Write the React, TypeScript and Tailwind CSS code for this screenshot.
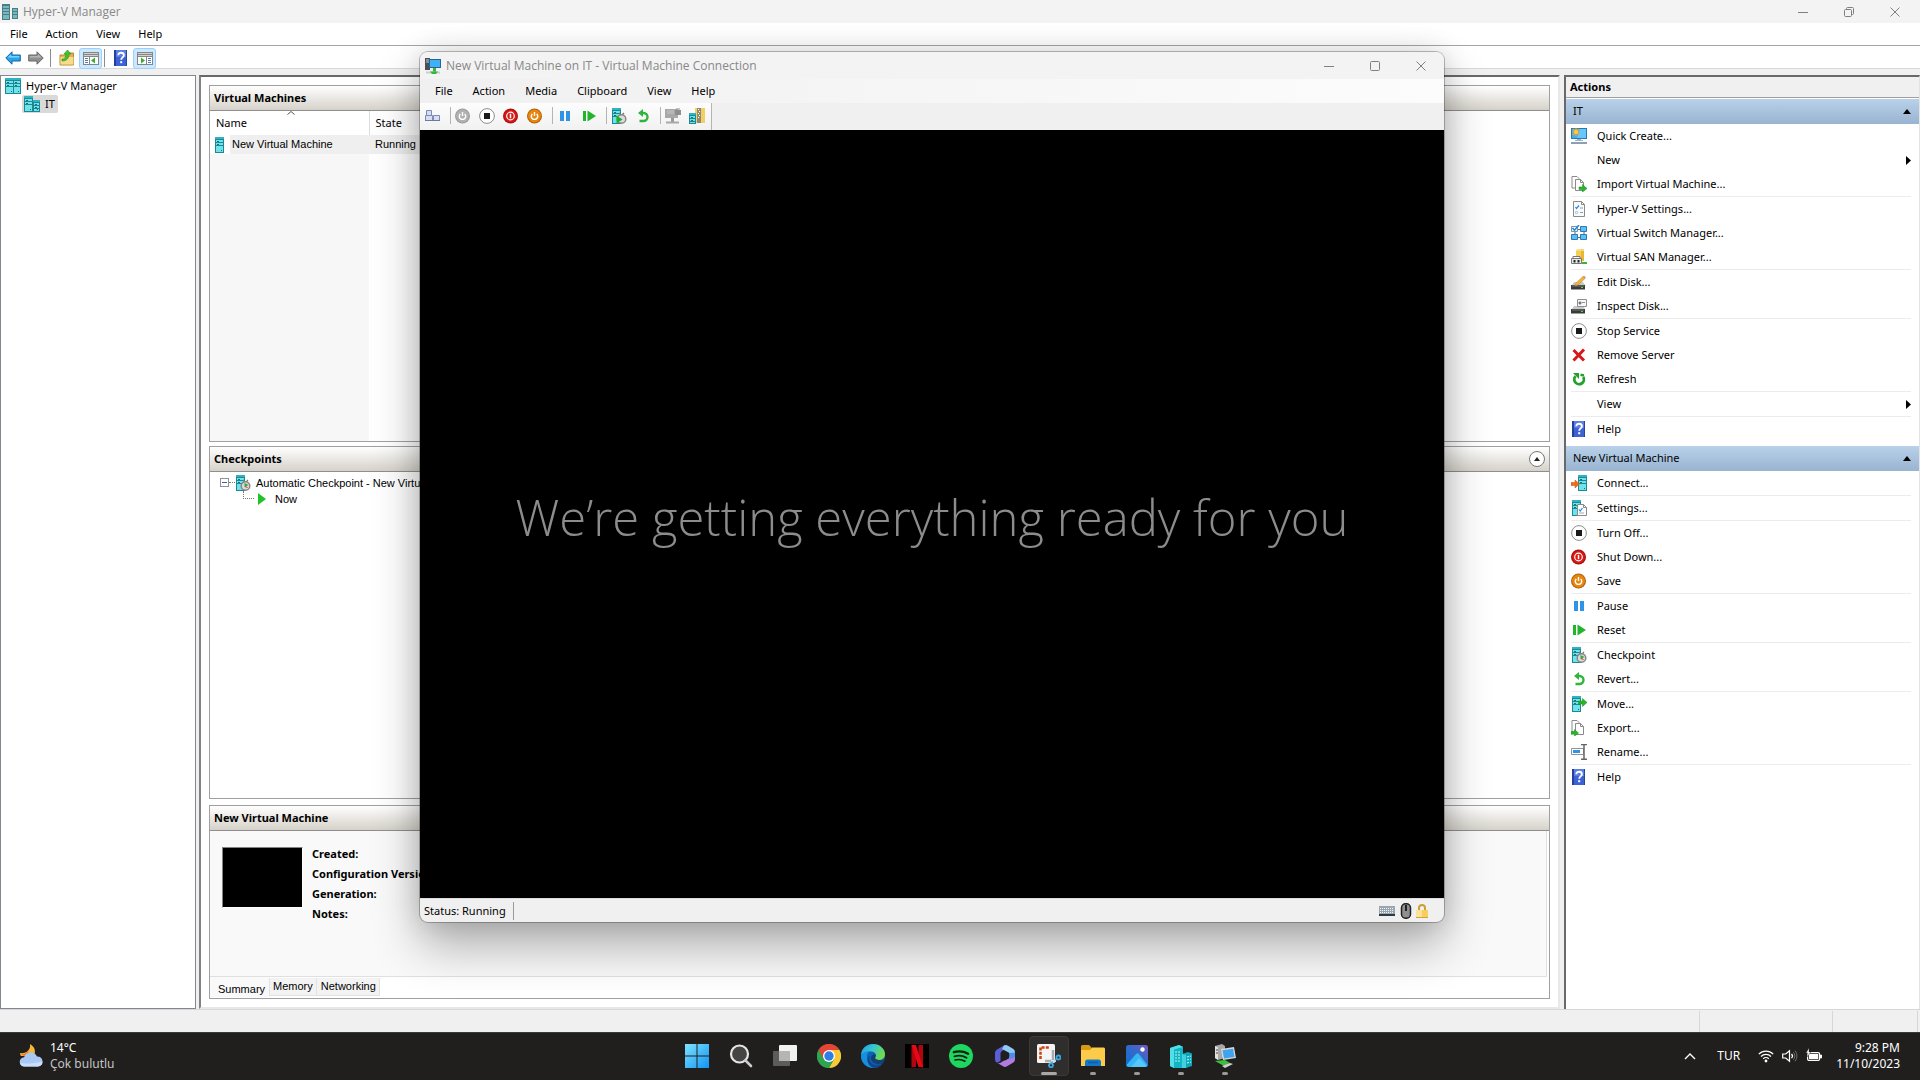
import type { ReactNode } from "react";

/* ---------- small 16px icon set ---------- */

function Svg({ children, box = "0 0 16 16", className = "size-4" }: { children: ReactNode; box?: string; className?: string }) {
  return (
    <svg viewBox={box} className={`${className} block shrink-0`} fill="none" aria-hidden="true">
      {children}
    </svg>
  );
}

function Tower({ x = 0, y = 0, w = 9, h = 16 }: { x?: number; y?: number; w?: number; h?: number }) {
  return (
    <g shapeRendering="crispEdges">
      <rect x={x} y={y} width={w} height={h} fill="#1f8694" />
      <rect x={x} y={y} width={w} height={2} fill="#2fb3c0" />
      <rect x={x + 1} y={y + 3} width={w - 2} height={h - 4} fill="#6fe3ea" />
      <rect x={x + 1} y={y + 5} width={w - 2} height={1} fill="#1f8694" />
      <rect x={x + 1} y={y + 8} width={w - 2} height={1} fill="#1f8694" />
      <rect x={x + 2} y={y + 4} width={2} height={1} fill="#1f6f7c" />
      <rect x={x + 2} y={y + 7} width={2} height={1} fill="#1f6f7c" />
      <rect x={x + w - 3} y={y + h - 3} width={1} height={1} fill="#1f6f7c" />
    </g>
  );
}

const ServerIcon = () => (
  <Svg>
    <Tower x={0} />
  </Svg>
);
const ManagerIcon = () => (
  <Svg>
    <Tower x={0} />
    <Tower x={8} w={8} />
  </Svg>
);
const HostIcon = () => (
  <Svg>
    <Tower x={0} />
    <Tower x={9} y={4} w={7} h={12} />
  </Svg>
);
const AppIcon = () => (
  <Svg>
    <g opacity="0.85" shapeRendering="crispEdges">
      <rect x="0" y="0" width="8" height="16" fill="#2c6a75" />
      <path d="M1 2h6v2H1zM1 5h6v2H1zM1 8h6v2H1zM1 11h6v4H1z" fill="#66adb3" />
      <rect x="10" y="4" width="6" height="11" fill="#2c6a75" />
      <path d="M11 5h4v2h-4zM11 8h4v2h-4zM11 11h4v3h-4z" fill="#66adb3" />
    </g>
  </Svg>
);
const BackIcon = () => (
  <Svg>
    <path d="M.8 8 7 1.8V5h8.3v6H7v3.2z" fill="#27a4ec" stroke="#1762a8" />
    <path d="M2.6 7.6 6 4.3V6h8.2v1.5z" fill="#7fd3fb" />
  </Svg>
);
const ForwardIcon = () => (
  <Svg>
    <path d="M15.2 8 9 1.8V5H.7v6H9v3.2z" fill="#8f8f8f" stroke="#666" />
    <path d="M13.4 7.6 10 4.3V6H1.8v1.5z" fill="#b5b5b5" />
  </Svg>
);
const UpFolderIcon = () => (
  <Svg>
    <path d="M1 5h5l1-2h7.500v12H1z" fill="#e2b24d" stroke="#b98a2c" />
    <path d="M1.500 7h13v7.500h-13z" fill="#f8dc8c" />
    <path d="M3 9c3 0 4-2 4-5H5l3.500-4L12 4h-2c0 4-2 7-7 7z" fill="#3fc42c" stroke="#2a8f20" strokeWidth=".6" />
  </Svg>
);
const PaneIcon = ({ flip = false }: { flip?: boolean }) => (
  <Svg>
    <g shapeRendering="crispEdges" transform={flip ? "matrix(-1 0 0 1 16 0)" : undefined}>
      <rect x="0" y="2" width="16" height="13" fill="#868686" />
      <rect x="1" y="3" width="14" height="1" fill="#d0d0d0" />
      <rect x="1" y="5" width="14" height="1" fill="#d0d0d0" />
      <rect x="1" y="7" width="5" height="7" fill="#fff" />
      <rect x="7" y="7" width="8" height="7" fill="#fff" />
      <path d="M2 8h3v1H2zM2 10h3v1H2zM2 12h3v1H2z" fill="#4f7cb8" />
    </g>
    <path d={flip ? "M4 7.500v6l4-3z" : "M12 7.500v6l-4-3z"} fill="#36b02c" />
  </Svg>
);
const HelpIcon = () => (
  <Svg>
    <rect x="1" y="0" width="13" height="16" fill="#3d62d4" />
    <rect x="1" y="0" width="2" height="16" fill="#243f9c" />
    <rect x="13" y="0" width="1" height="16" fill="#27459f" />
    <rect x="3" y="0" width="10" height="7" fill="#5b7ee4" />
    <path d="M5.300 5.200C5.300 1.900 10.900 2 10.900 5.200c0 2.200-2.700 2.200-2.700 4.600" stroke="#fff" strokeWidth="1.900" />
    <rect x="7.200" y="11.200" width="2" height="2" fill="#fff" />
  </Svg>
);
const QuickCreateIcon = () => (
  <Svg>
    <rect x="0" y="0" width="16" height="11" fill="#2c78ad" />
    <rect x="1" y="1" width="14" height="9" fill="#3fb0f2" />
    <path d="M9 1h6v9H6z" fill="#62c8ff" />
    <path d="M6 11h4v1.500H6zM4 12h8v1H4z" fill="#9db4c8" />
    <path d="M0 14h16v2H0z" fill="#8f9fb3" />
    <path d="M5 0v8M1 4h8M2 1l6 6M8 1 2 7" stroke="#f6a821" strokeWidth="1.200" />
    <circle cx="5" cy="4" r="2" fill="#ffcf3e" />
  </Svg>
);
const Pages = () => (
  <g>
    <path d="M1 .500h5l2 2V12H1z" fill="#fff" stroke="#8a8a8a" />
    <path d="M4.500 3.500h5l3 3v8h-8z" fill="#fff" stroke="#8a8a8a" />
    <path d="M9.500 3.500v3h3" stroke="#8a8a8a" />
  </g>
);
const ImportIcon = () => (
  <Svg>
    <Pages />
    <path d="M8 11h3.500V8.500L16 12.500l-4.500 3.500v-2.500H8z" fill="#27b52a" stroke="#178a1d" strokeWidth=".5" />
  </Svg>
);
const ExportIcon = () => (
  <Svg>
    <Pages />
    <path d="M0 11.500h3.500V9.500L7.500 13l-4 3.200v-2H0z" fill="#27b52a" stroke="#178a1d" strokeWidth=".5" />
  </Svg>
);
const SettingsPageIcon = () => (
  <Svg>
    <path d="M2.500.5h8l3 3v12h-11z" fill="#f8fbfd" stroke="#8a8a8a" />
    <path d="M10.500.5v3h3" stroke="#8a8a8a" />
    <path d="m4.500 6 1 1.500L8 4.500" stroke="#2b87d8" strokeWidth="1.200" />
    <path d="M9 7h3M9 11.500h3" stroke="#9a9a9a" />
    <path d="M4.500 10.500h2v2h-2z" stroke="#c0c8d0" />
  </Svg>
);
const SwitchIcon = () => (
  <Svg>
    <path d="M6 4.500h4M6 12.500h4M4 7v3M13 7v3" stroke="#666" />
    <path d="M9.500 1.500h6v5h-6zM.5 9.500h6v5h-6zM9.500 9.500h6v5h-6z" fill="#5cc0f5" stroke="#2a7bb5" />
    <path d="M.5 1.500h6v5h-6z" fill="#eaf6fe" stroke="#7a93b5" />
    <path d="m1.500 3 2 2.200L8 0" stroke="#1f86d8" strokeWidth="1.500" />
  </Svg>
);
const SanIcon = () => (
  <Svg>
    <path d="M5 1.200C5 0 13 0 13 1.200V12H5z" fill="#f5ce55" />
    <path d="M10 .500h3V12h-3z" fill="#e8b833" />
    <path d="M5 1.200h8" stroke="#fbe79a" />
    <path d="M11 13h5v2h-5z" fill="#36b53a" />
    <path d="M2 7.500h7v3H2z" fill="#fff" stroke="#777" />
    <path d="M.5 9.500h10v5H.5z" fill="#e9e9e9" stroke="#777" />
    <path d="M2.500 11h2v2.500h-2zM6.500 11h2v2.500h-2z" fill="#222" />
  </Svg>
);
const DiskBase = () => (
  <>
    <path d="M3 8h9l2 3H1z" fill="#c9c9c9" />
    <rect x="0" y="11" width="14" height="4.500" fill="#3a3a3a" />
    <path d="M1 12h12" stroke="#777" />
    <rect x="10" y="13" width="2" height="1" fill="#45e04c" />
  </>
);
const EditDiskIcon = () => (
  <Svg>
    <DiskBase />
    <path d="m4 12 1-3 7-6.500 2 2L7 11z" fill="#f3b53d" stroke="#b0762a" strokeWidth=".5" />
    <path d="m12 2.500 1-.8 1.800 1.800-.8 1z" fill="#e07b6b" />
  </Svg>
);
const InspectDiskIcon = () => (
  <Svg>
    <DiskBase />
    <path d="M6.500 1.500h9v7h-9z" fill="#f4f6f8" stroke="#8a8f94" />
    <path d="M8 4h2v2H8zM11 4.500h3" fill="#777" stroke="#777" strokeWidth=".8" />
  </Svg>
);
const StopIcon = () => (
  <Svg>
    <circle cx="8" cy="8" r="7.400" fill="#fff" stroke="#8e8e8e" />
    <rect x="5" y="5" width="6" height="6" fill="#1b1b1b" />
  </Svg>
);
const RemoveIcon = () => (
  <Svg>
    <path d="M2.500 3 13 13.500M13 2.500 2.500 13.500" stroke="#d8161b" strokeWidth="3" />
  </Svg>
);
const RefreshIcon = () => (
  <Svg>
    <path d="M4.500 5.200A4.800 4.800 0 1 0 12.300 6" stroke="#23a02c" strokeWidth="2.800" />
    <path d="M2 2h6v6L6 6z" fill="#23a02c" />
    <path d="M9.500 3.800 13 4.500" stroke="#23a02c" strokeWidth="2.500" />
  </Svg>
);
const ConnectIcon = () => (
  <Svg>
    <Tower x={7} />
    <path d="M0 7.500h4V5l4.500 4L4 13v-2.500H0z" fill="#f26a1b" stroke="#c94b0b" strokeWidth=".5" />
  </Svg>
);
const VmSettingsIcon = () => (
  <Svg>
    <Tower x={1} />
    <path d="M6.500 4.500h6l3 3v8h-9z" fill="#fafdff" stroke="#8a8a8a" />
    <path d="M12.500 4.500v3h3" stroke="#8a8a8a" />
    <path d="m8 9.500 1.200 1.500L11.500 8" stroke="#2b87d8" strokeWidth="1.200" />
    <path d="M8 13h5" stroke="#aaa" />
  </Svg>
);
const ShutDownIcon = () => (
  <Svg>
    <circle cx="7.500" cy="8" r="7.500" fill="#a8100f" />
    <circle cx="7.500" cy="8" r="6.300" fill="#dd1714" />
    <circle cx="7.500" cy="8" r="3.800" stroke="#fff" strokeWidth="1.200" />
    <path d="M7.500 5.800v4.400" stroke="#fff" strokeWidth="1.500" />
  </Svg>
);
const PowerDisc = ({ rim, fill }: { rim: string; fill: string }) => (
  <Svg>
    <circle cx="7.500" cy="8" r="7.500" fill={rim} />
    <circle cx="7.500" cy="8" r="6.400" fill={fill} />
    <path d="M5.300 5.900a3.200 3.200 0 1 0 4.400 0M7.500 4v4" stroke="#fff" strokeWidth="1.400" />
  </Svg>
);
const SaveIcon = () => <PowerDisc rim="#b0650a" fill="#e8870f" />;
const StartIcon = () => <PowerDisc rim="#9c9c9c" fill="#b1b1b1" />;
const PauseIcon = () => (
  <Svg>
    <path d="M3 3h4v10H3zM9 3h4v10H9z" fill="#2f93e6" />
  </Svg>
);
const ResetIcon = () => (
  <Svg>
    <path d="M2 3h3v10H2zM6.500 2.500 15 8l-8.500 5.500z" fill="#22b52b" />
  </Svg>
);
const CheckpointIcon = ({ play = false }: { play?: boolean }) => (
  <Svg>
    <Tower x={1} />
    <path d="m8 5 1.500 1.500M13 5l-1.500 1.500" stroke="#777" strokeWidth="1.200" />
    <circle cx="10.500" cy="11" r="4.300" fill="#dadada" stroke="#858585" strokeWidth="1.400" />
    {play ? (
      <path d="M5.500 7.500v8l6-4z" fill="#1fae28" />
    ) : (
      <path d="M9.500 8v4l4-2z" fill="#2fae35" />
    )}
    {!play && <path d="m10 11.500 2.500 1" stroke="#c33" />}
  </Svg>
);
const RevertIcon = () => (
  <Svg>
    <path d="M6 5h2.500a4 4 0 0 1 0 8H4.500" stroke="#2fb53a" strokeWidth="2.400" />
    <path d="M3 5 8 1v8z" fill="#2fb53a" />
  </Svg>
);
const MoveIcon = () => (
  <Svg>
    <Tower x={1} />
    <path d="M7.500 5h4V2.500L16 6.500l-4.500 4V8h-4z" fill="#27b52a" stroke="#178a1d" strokeWidth=".5" />
  </Svg>
);
const RenameIcon = () => (
  <Svg>
    <path d="M.5 4.500h12v6H.5z" fill="#fff" stroke="#8f9499" />
    <path d="M2 6h7v3H2z" fill="#2f93e6" />
    <path d="M10 .500h6M10 15.200h6M13 .500v15" stroke="#666" strokeWidth="1.500" />
  </Svg>
);
const MonitorIcon = () => (
  <Svg>
    <rect x="0" y="0" width="5" height="12" fill="#4a4f55" />
    <path d="M1 2h3M1 4h3" stroke="#c9ced2" />
    <rect x="4" y="1" width="12" height="9" fill="#28648f" />
    <rect x="5" y="2" width="10" height="7" fill="#3fb2f5" />
    <rect x="8" y="10" width="3" height="4" fill="#35b83d" />
    <path d="M1 14.500h14" stroke="#c9ced2" strokeWidth="2" />
    <path d="M5 13.500h8L11 16H7z" fill="#35b83d" />
  </Svg>
);
const CtrlAltDelIcon = () => (
  <Svg>
    <path d="M1.500 2.500h5v5h-5zM.5 7.500h7v5h-7zM8.500 7.500h6v5h-6z" fill="#d6def0" stroke="#7d8cb5" />
    <path d="M0 12.500h15" stroke="#6b7aa5" />
  </Svg>
);
const EnhancedIcon = () => (
  <Svg>
    <rect x="0" y="1" width="13" height="9" fill="#a8a8a8" />
    <rect x="10" y="2" width="6" height="5" fill="#8f8f8f" />
    <path d="M12 0v3M14 0v3" stroke="#8f8f8f" />
    <path d="M2 3h7M2 5h7" stroke="#c5c5c5" />
    <rect x="6" y="10" width="3" height="4" fill="#9a9a9a" />
    <path d="M1 14.500h13" stroke="#a8a8a8" strokeWidth="2" />
  </Svg>
);
const ShareIcon = () => (
  <Svg>
    <path d="M6 0h10v15H6z" fill="#f3cf63" />
    <path d="M8 0h4v15H8z" fill="#8d8a78" />
    <path d="M9 1h1v1H9zM10 3h1v1h-1zM9 5h1v1H9zM10 7h1v1h-1zM9 9h1v1H9z" fill="#fff" />
    <Tower x={0} y={5} w={7} h={11} />
  </Svg>
);

/* ---------- shared pieces ---------- */

function MenuBar({ items, className }: { items: string[]; className: string }) {
  return (
    <nav className={`flex items-center ${className}`}>
      {items.map((m) => (
        <button key={m} type="button" className="px-2 leading-5 text-black">
          {m}
        </button>
      ))}
    </nav>
  );
}

function WindowGlyph({ kind }: { kind: "min" | "max" | "restore" | "close" }) {
  return (
    <svg viewBox="0 0 10 10" className="size-[10px]" fill="none" stroke="#808080" aria-hidden="true">
      {kind === "min" && <path d="M0 5.500h10" />}
      {kind === "max" && <rect x=".5" y=".5" width="9" height="9" rx="1" />}
      {kind === "restore" && (
        <>
          <rect x=".5" y="2.500" width="7" height="7" rx="1" />
          <path d="M2.500 2V1.500a1 1 0 0 1 1-1h5a1 1 0 0 1 1 1v5a1 1 0 0 1-1 1H8" />
        </>
      )}
      {kind === "close" && <path d="m.5.5 9 9M9.500.5l-9 9" />}
    </svg>
  );
}

function WindowControls({ kinds }: { kinds: ("min" | "max" | "restore" | "close")[] }) {
  return (
    <div className="ml-auto flex self-stretch">
      {kinds.map((k) => (
        <button key={k} type="button" aria-label={k} className="grid w-[46px] place-items-center">
          <WindowGlyph kind={k} />
        </button>
      ))}
    </div>
  );
}

function GroupHeader({ title, children }: { title: string; children?: ReactNode }) {
  return (
    <header className="flex h-[25px] shrink-0 items-center justify-between border-b border-[#8f8f8f] bg-linear-to-b from-white to-[#d6d2ca] px-1">
      <h2 className="text-[11px] leading-4 font-bold text-black">{title}</h2>
      {children}
    </header>
  );
}

/* ---------- actions pane ---------- */

type Action = { label: string; icon?: ReactNode; arrow?: boolean };

const hostActions: Action[][] = [
  [
    { label: "Quick Create...", icon: <QuickCreateIcon /> },
    { label: "New", arrow: true },
    { label: "Import Virtual Machine...", icon: <ImportIcon /> },
  ],
  [
    { label: "Hyper-V Settings...", icon: <SettingsPageIcon /> },
    { label: "Virtual Switch Manager...", icon: <SwitchIcon /> },
    { label: "Virtual SAN Manager...", icon: <SanIcon /> },
  ],
  [
    { label: "Edit Disk...", icon: <EditDiskIcon /> },
    { label: "Inspect Disk...", icon: <InspectDiskIcon /> },
  ],
  [
    { label: "Stop Service", icon: <StopIcon /> },
    { label: "Remove Server", icon: <RemoveIcon /> },
    { label: "Refresh", icon: <RefreshIcon /> },
  ],
  [{ label: "View", arrow: true }],
  [{ label: "Help", icon: <HelpIcon /> }],
];

const vmActions: Action[][] = [
  [{ label: "Connect...", icon: <ConnectIcon /> }],
  [{ label: "Settings...", icon: <VmSettingsIcon /> }],
  [
    { label: "Turn Off...", icon: <StopIcon /> },
    { label: "Shut Down...", icon: <ShutDownIcon /> },
    { label: "Save", icon: <SaveIcon /> },
  ],
  [
    { label: "Pause", icon: <PauseIcon /> },
    { label: "Reset", icon: <ResetIcon /> },
  ],
  [
    { label: "Checkpoint", icon: <CheckpointIcon /> },
    { label: "Revert...", icon: <RevertIcon /> },
  ],
  [
    { label: "Move...", icon: <MoveIcon /> },
    { label: "Export...", icon: <ExportIcon /> },
    { label: "Rename...", icon: <RenameIcon /> },
  ],
  [{ label: "Help", icon: <HelpIcon /> }],
];

function ActionSection({ title, groups }: { title: string; groups: Action[][] }) {
  return (
    <section className="pb-[5px]">
      <button
        type="button"
        className="flex h-[25px] w-full items-center justify-between bg-linear-to-b from-[#b9d1ea] to-[#99b4d1] pr-2 pl-[7px] text-left"
      >
        {title}
        <svg viewBox="0 0 8 5" className="h-[5px] w-2" aria-hidden="true">
          <path d="M4 0 8 5H0z" fill="#000" />
        </svg>
      </button>
      <div className="divide-y divide-[#ececec] pr-2 pl-[5px]">
        {groups.map((g) => (
          <ul key={g[0].label}>
            {g.map((a) => (
              <li key={a.label}>
                <button type="button" className="flex h-6 w-full items-center gap-[10px] text-left">
                  <span className="size-4 shrink-0">{a.icon}</span>
                  <span className="flex-1 leading-5">{a.label}</span>
                  {a.arrow && (
                    <svg viewBox="0 0 5 9" className="h-[9px] w-[5px]" aria-hidden="true">
                      <path d="M0 0 5 4.500 0 9z" fill="#000" />
                    </svg>
                  )}
                </button>
              </li>
            ))}
          </ul>
        ))}
      </div>
    </section>
  );
}

/* ---------- virtual machine connection window ---------- */

function ToolDivider() {
  return <span className="ml-[5px] h-[17px] w-px bg-[#b4b4b4]" />;
}

function ToolButton({ label, children }: { label: string; children: ReactNode }) {
  return (
    <button type="button" aria-label={label} className="grid w-6 place-items-center">
      {children}
    </button>
  );
}

function ConnectionWindow() {
  return (
    <section className="absolute top-[52px] left-[420px] flex w-[1024px] flex-col overflow-hidden rounded-lg bg-[#f0f0f0] shadow-[0_0_0_1px_rgba(0,0,0,0.25),0_24px_48px_rgba(0,0,0,0.3),0_0_28px_rgba(0,0,0,0.14)]">
      <header className="flex h-[27px] items-center bg-[#f3f3f3] pl-[5px]">
        <MonitorIcon />
        <h1 className="pl-[5px] font-['Open_Sans'] text-[12px] leading-5 text-[#888]">New Virtual Machine on IT - Virtual Machine Connection</h1>
        <WindowControls kinds={["min", "max", "close"]} />
      </header>
      <MenuBar
        items={["File", "Action", "Media", "Clipboard", "View", "Help"]}
        className="h-6 gap-1 bg-linear-to-r from-[#f0f0f0] to-[#fcfcfc] pl-[7px]"
      />
      <div className="flex h-[27px]">
        <div className="flex items-center border-r border-[#b4b4b4] bg-linear-to-b from-[#fdfdfd] to-[#f1f1f1] pr-[2px] pb-[2px] pl-px">
          <ToolButton label="Ctrl+Alt+Delete"><CtrlAltDelIcon /></ToolButton>
          <ToolDivider />
          <ToolButton label="Start"><StartIcon /></ToolButton>
          <ToolButton label="Turn Off"><StopIcon /></ToolButton>
          <ToolButton label="Shut Down"><ShutDownIcon /></ToolButton>
          <ToolButton label="Save"><SaveIcon /></ToolButton>
          <ToolDivider />
          <ToolButton label="Pause"><PauseIcon /></ToolButton>
          <ToolButton label="Reset"><ResetIcon /></ToolButton>
          <ToolDivider />
          <ToolButton label="Checkpoint"><CheckpointIcon play /></ToolButton>
          <ToolButton label="Revert"><RevertIcon /></ToolButton>
          <ToolDivider />
          <ToolButton label="Enhanced Session"><EnhancedIcon /></ToolButton>
          <ToolButton label="Share"><ShareIcon /></ToolButton>
        </div>
      </div>
      <div className="grid h-[768px] place-items-center bg-black">
        <p className="pt-[6px] font-['Open_Sans'] text-[49px] leading-[60px] font-light whitespace-nowrap text-[#8c8c8c]">
          We’re getting everything ready for you
        </p>
      </div>
      <footer className="flex h-6 items-center border-t border-[#dcdcdc] pr-[14px] pl-1">
        <span className="border-r border-[#9a9a9a] pr-[7px] leading-[18px] text-black">Status: Running</span>
        <div className="ml-auto flex items-center">
          <Svg className="mr-[3px] size-4">
            <rect x="0" y="3" width="16" height="10" fill="#9aa7b0" />
            <path d="M1 5.500h14M1 7.500h14M1 9.500h14" stroke="#f2f5f7" strokeDasharray="1 1" />
            <rect x="0" y="11" width="16" height="2" fill="#2f3a42" />
          </Svg>
          <Svg>
            <rect x="3.500" y=".8" width="9" height="14.400" rx="4" fill="#8f8f8f" stroke="#222" strokeWidth="1.500" />
            <rect x="7" y="2" width="2" height="6" fill="#222" />
          </Svg>
          <Svg>
            <path d="M5 8V5a3 3 0 0 1 6 0v3" stroke="#c9a033" strokeWidth="2" />
            <rect x="2" y="7" width="12" height="8" fill="#fbce5c" />
            <rect x="2" y="7" width="6" height="8" fill="#fde29a" />
            <path d="M2 14.500h12" stroke="#d9a036" />
          </Svg>
        </div>
      </footer>
    </section>
  );
}

/* ---------- taskbar ---------- */

const taskIcons: { name: string; active?: boolean; open?: boolean; art: ReactNode }[] = [
  {
    name: "Start",
    art: (
      <>
        <defs>
          <linearGradient id="win" x1="0" y1="0" x2="1" y2="1">
            <stop stopColor="#7fe3fd" />
            <stop offset="1" stopColor="#0f93f5" />
          </linearGradient>
        </defs>
        <path d="M0 0h11.500v11.500H0zM12.500 0H24v11.500H12.500zM0 12.500h11.500V24H0zM12.500 12.500H24V24H12.500z" fill="url(#win)" />
      </>
    ),
  },
  {
    name: "Search",
    art: (
      <>
        <circle cx="10.500" cy="10" r="8.500" fill="#454545" stroke="#e6e6e6" strokeWidth="2.200" />
        <path d="m16.500 16.500 5.500 5.500" stroke="#c9ccd0" strokeWidth="2.600" strokeLinecap="round" />
      </>
    ),
  },
  {
    name: "Task View",
    art: (
      <>
        <rect x="0" y="7" width="17" height="15" rx="1" fill="#5c5c5c" />
        <rect x="6" y="1" width="18" height="16" rx="1" fill="#f2f2f2" />
        <rect x="6" y="7" width="11" height="10" fill="#b5b5b5" />
      </>
    ),
  },
  {
    name: "Chrome",
    art: (
      <>
        <circle cx="12" cy="12" r="12" fill="#31a350" />
        <path d="M12 12 1.600 6A12 12 0 0 1 22.400 6z" fill="#e94335" />
        <path d="M12 6h10.400A12 12 0 0 1 12 24l5.200-9z" fill="#fcc934" />
        <path d="M1.600 6 6.800 15 12 12V6z" fill="#e94335" />
        <path d="M1.600 6A12 12 0 0 0 12 24l5.200-9L12 12l-5.200 3z" fill="#31a350" />
        <circle cx="12" cy="12" r="6" fill="#fff" />
        <circle cx="12" cy="12" r="4.700" fill="#2f7de8" />
      </>
    ),
  },
  {
    name: "Edge",
    art: (
      <>
        <defs>
          <linearGradient id="edgeTop" x1="0" y1="0" x2="1" y2=".4">
            <stop stopColor="#1f9be0" />
            <stop offset=".5" stopColor="#35c3d5" />
            <stop offset="1" stopColor="#6fdc50" />
          </linearGradient>
        </defs>
        <circle cx="12" cy="12" r="12" fill="#0c62b5" />
        <path d="M0 12C0 4 6 0 12 0c7 0 12 5 12 10 0 4-3 6-6 6-2.500 0-4-1-4-2 0-.7 1-1 1-2.500 0-2.500-2.500-4-5.500-4C4 7.500 0 10 0 12z" fill="url(#edgeTop)" />
        <path d="M0 12c.5-3 4-4.500 8.500-4.500C5.500 9 5 15 8 19c2 2.700 5 4 8 4.200A12 12 0 0 1 0 12z" fill="#1690dd" />
        <path d="M9 12c-2 4 1 9 7 9 2.500 0 4-.7 6-2-2 3-5 5-9 5-4-1-7-5-6.500-9C7 13 8 12 9 12z" fill="#12458c" />
        <path d="M15 12c-1.500 1-1 4 3.500 4 2 0 3.500-.6 4.700-1.600L22 19c-4 2.500-11 1-12-4-.4-2 1-4 2-4.500 2-.5 3 .5 3 1.500z" fill="#1c2c44" opacity=".6" />
      </>
    ),
  },
  {
    name: "Netflix",
    art: (
      <>
        <rect width="24" height="24" fill="#000" />
        <path d="M6.500 1H11v22c-1.500 0-3 .1-4.500.4zM13.500 1H18v22.400c-1.500-.3-3-.4-4.500-.4z" fill="#b1060f" />
        <path d="M6.500 1H11l7 22.400c-1.500-.3-3-.4-4.500-.4z" fill="#e50914" />
      </>
    ),
  },
  {
    name: "Spotify",
    art: (
      <>
        <circle cx="12" cy="12" r="12" fill="#1ed760" />
        <g stroke="#10200f" strokeLinecap="round">
          <path d="M4.800 8.200c4.800-1.400 10-.9 14.300 1.500" strokeWidth="2.300" />
          <path d="M5.500 12.300c4-1.200 8.500-.7 12 1.400" strokeWidth="1.900" />
          <path d="M6 16c3.500-.9 7-.5 10 1.200" strokeWidth="1.600" />
        </g>
      </>
    ),
  },
  {
    name: "Microsoft 365",
    art: (
      <>
        <path d="M11 1.500 4 5.500a4 4 0 0 0-2 3.500v6.500a4 4 0 0 0 2 3.300L7.500 17V9.500a3 3 0 0 1 1.500-2.600L14 4z" fill="#5a5fd6" />
        <path d="M11 1.500c1.500-.8 2.500-.6 4 .2l5 3A4 4 0 0 1 22 8.500V14l-5.500-3V9L9 5z" fill="#8fc8f5" />
        <path d="M22 12v3.500a4 4 0 0 1-2 3.300L14 22.300a4 4 0 0 1-4 0l-6-3.500c2 .8 4 0 5-1l5.500-3a3 3 0 0 0 2-3L22 9z" fill="#b27be0" />
        <path d="M22 8.500V13l-5.500 2.500V9z" fill="#4a8fe8" />
        <path d="m12 8 4 2.300v4L12 16.600l-4-2.300v-4z" fill="#1f1f1f" />
      </>
    ),
  },
  {
    name: "Snipping Tool",
    active: true,
    art: (
      <>
        <rect x="0" y="0" width="18" height="19" rx="1.500" fill="#f4f4f4" />
        <path d="M3.500 15V3.500H13" stroke="#d0400f" strokeWidth="2.500" strokeDasharray="3 1.200" />
        <path d="M8 17h8V6" stroke="#a9adb0" strokeWidth="2.500" />
        <path d="M14 17h5M16 19v-3" stroke="#dcdcdc" strokeWidth="2" />
        <path d="m18 16 2-1.500M15.500 17.500 14.500 19.500" stroke="#3aa7e0" strokeWidth="1.600" />
        <circle cx="21.500" cy="13.500" r="2" stroke="#3aa7e0" strokeWidth="1.800" />
        <circle cx="14" cy="21.300" r="2" stroke="#3aa7e0" strokeWidth="1.800" />
      </>
    ),
  },
  {
    name: "File Explorer",
    open: true,
    art: (
      <>
        <path d="M0 2.500A1.500 1.500 0 0 1 1.500 1H8l2.500 2.500V8H0z" fill="#d99a10" />
        <path d="M0 6h9l2-2.500h11A1.500 1.500 0 0 1 24 5v17H0z" fill="#fdcb4a" />
        <path d="M4 22v-4a2.500 2.500 0 0 1 2.500-2.500h11A2.500 2.500 0 0 1 20 18v4z" fill="#1478c8" />
        <path d="M7 18.500h10" stroke="#0d5ea5" strokeWidth="1.500" />
      </>
    ),
  },
  {
    name: "Photos",
    open: true,
    art: (
      <>
        <defs>
          <linearGradient id="photos" x1="0" y1="1" x2="1" y2="0">
            <stop stopColor="#0d6fd4" />
            <stop offset=".6" stopColor="#3868c8" />
            <stop offset="1" stopColor="#7a55c0" />
          </linearGradient>
        </defs>
        <rect x="1" y="1" width="22" height="22" rx="2.500" fill="url(#photos)" />
        <path d="M1.500 21 11 10a2 2 0 0 1 3 0l8.500 11c-.5 1.300-1 2-2.500 2H4c-1.500 0-2-.7-2.500-2z" fill="#35b5f5" />
        <path d="M6 23 14 14l7.500 8c-.5.700-1 1-2 1z" fill="#79d8fb" opacity=".5" />
        <circle cx="17.500" cy="5.500" r="2.200" fill="#fff" />
      </>
    ),
  },
  {
    name: "Hyper-V Manager",
    open: true,
    art: (
      <>
        <path d="m1 4 9-3 4 2v21H5l-4-2z" fill="#13b5c4" />
        <path d="m1 4 4 1.500V24l-4-2zM1 4l9-3 4 2-9 2.500z" fill="#4fe0ea" />
        <path d="m13 10 6-2 4 1.500V22l-6 2h-4z" fill="#0ea6b8" />
        <path d="m13 10 4 1v13h-4z" fill="#3cd3df" />
        <path d="M6 8h6M6 11h6M6 14h6M6 17h6M18 13l4-1M18 16l4-1M18 19l4-1" stroke="#bff7fa" strokeWidth="1.200" strokeDasharray="2 1" />
      </>
    ),
  },
  {
    name: "Virtual Machine Connection",
    open: true,
    art: (
      <>
        <path d="m2 2 7-2 3 2v12l-7 2-3-2z" fill="#a8a8a8" />
        <path d="m2 2 3 1.500V16l-3-2z" fill="#e0e0e0" />
        <path d="M3 6h2M3 9h2" stroke="#444" />
        <path d="m8 5 13-2 2 11-13 2z" fill="#d8d8d8" />
        <path d="m9.500 6.300 10.500-1.600 1.500 8.300-10.500 1.600z" fill="#3fa4ee" />
        <path d="m2 17 10-1 5 3-6 3z" fill="#3cbf3f" />
        <path d="m9 22 8-3 3 1-8 4z" fill="#d0d0d0" />
      </>
    ),
  },
];

function Taskbar() {
  return (
    <footer className="grid h-12 shrink-0 grid-cols-[1fr_auto_1fr] items-center border-t border-[#3a3a3a] bg-[#201f1e] pb-px pl-[2px] text-white">
      <button type="button" className="flex items-center gap-[7px] pl-[17px] text-left text-[12px] leading-4">
        <Svg box="0 0 24 24" className="size-6">
          <path d="M11 0c5 3 6 7 4 12H2c-1-1-.5-2-1-3 6 1 11-3 10-9z" fill="#f6b73c" />
          <path d="M1 10c4 1 6-1 8-3l2 5H5z" fill="#f07d1e" />
          <path d="M5.500 22.500a4.600 4.600 0 0 1-.4-9.200A7 7 0 0 1 18 12.500a5 5 0 0 1 1 10z" fill="#a9c8f5" />
          <path d="M5.500 22.500C3 22.500 1 21 1 18.500c4 2 14 1 22.500-1a5 5 0 0 1-4.500 5z" fill="#c9defa" />
        </Svg>
        <span>
          <span className="block">14°C</span>
          <span className="block text-[#c4c4c4]">Çok bulutlu</span>
        </span>
      </button>
      <div className="flex">
        {taskIcons.map((t) => (
          <button key={t.name} type="button" aria-label={t.name} className="relative grid h-[46px] w-11 place-items-center">
            {t.active && <span className="absolute inset-x-[2px] inset-y-[3px] rounded-[4px] border border-[#3b3a39] bg-[#2f2e2d]" />}
            <Svg box="0 0 24 24" className="relative size-6">
              {t.art}
            </Svg>
            {t.active && <span className="absolute bottom-[4px] h-[3px] w-4 rounded-full bg-[#a8a8a8]" />}
            {t.open && <span className="absolute bottom-[4px] h-[3px] w-[6px] rounded-full bg-[#9a9a9a]" />}
          </button>
        ))}
      </div>
      <div className="flex items-center justify-end pr-5 text-[12px] leading-4">
        <button type="button" aria-label="Show hidden icons" className="mr-[21px]">
          <Svg box="0 0 12 12" className="size-3">
            <path d="m1 9 5-5 5 5" stroke="#fff" strokeWidth="1.400" />
          </Svg>
        </button>
        <button type="button" className="mr-[18px]">
          TUR
        </button>
        <button type="button" aria-label="Network, volume and battery" className="mr-[14px] flex gap-2">
          <Svg>
            <path d="M.8 6.200a10.200 10.200 0 0 1 14.400 0M3 8.500a7 7 0 0 1 10 0M5.200 10.700a4 4 0 0 1 5.600 0" stroke="#fff" strokeWidth="1.200" />
            <circle cx="8" cy="13" r="1.400" fill="#fff" />
          </Svg>
          <Svg>
            <path d="M.700 6h3L7.500 2.700v10.600L3.700 10h-3z" stroke="#fff" strokeWidth="1.200" />
            <path d="M9.500 6a3 3 0 0 1 0 4.200" stroke="#fff" strokeWidth="1.200" />
            <path d="M11.300 4.200a5.500 5.500 0 0 1 0 7.600M13 2.700a8 8 0 0 1 0 10.600" stroke="#6c6c6c" />
          </Svg>
          <Svg>
            <rect x="1.600" y="4.600" width="12" height="7.800" rx="1.500" stroke="#fff" strokeWidth="1.200" />
            <rect x="3" y="6" width="9.300" height="5" fill="#fff" />
            <path d="M14.500 7v3h1V7z" fill="#fff" stroke="#fff" />
            <path d="M3 0 0 5h2L1 9l4-5H3z" fill="#fff" stroke="#201f1e" strokeWidth=".4" />
          </Svg>
        </button>
        <button type="button" className="text-right">
          <span className="block">9:28 PM</span>
          <span className="block">11/10/2023</span>
        </button>
      </div>
    </footer>
  );
}

/* ---------- page ---------- */

export default function App() {
  return (
    <div className="relative flex min-h-screen flex-col overflow-hidden bg-[#f0f0f0] font-['Noto_Sans',sans-serif] text-[11px] text-black">
      <header className="flex h-[23px] shrink-0 items-center bg-[#f3f3f3] pr-[2px] pl-[2px]">
        <AppIcon />
        <h1 className="pl-[5px] font-['Open_Sans'] text-[12px] leading-5 text-[#888]">Hyper-V Manager</h1>
        <WindowControls kinds={["min", "restore", "close"]} />
      </header>
      <MenuBar items={["File", "Action", "View", "Help"]} className="h-[22px] shrink-0 gap-[2px] bg-white pb-px pl-[2px]" />
      <div className="flex h-6 shrink-0 items-center border-t border-b border-t-[#a5a5ad] border-b-[#d9d9d9] bg-white pt-[2px] pl-[5px]">
        <button type="button" aria-label="Back"><BackIcon /></button>
        <button type="button" aria-label="Forward" className="ml-[7px]"><ForwardIcon /></button>
        <span className="mx-[6px] h-[18px] w-px bg-[#8d8d8d]" />
        <button type="button" aria-label="Up one level" className="ml-[2px]"><UpFolderIcon /></button>
        <button type="button" aria-label="Show or hide console tree" className="ml-1 grid h-[21px] w-[23px] place-items-center rounded-[3px] border border-[#99d1ff] bg-[#cce8ff]">
          <PaneIcon />
        </button>
        <span className="mr-2 ml-[2px] h-[18px] w-px bg-[#8d8d8d]" />
        <button type="button" aria-label="Help"><HelpIcon /></button>
        <button type="button" aria-label="Show or hide action pane" className="ml-1 grid h-[21px] w-[23px] place-items-center rounded-[3px] border border-[#99d1ff] bg-[#cce8ff]">
          <PaneIcon flip />
        </button>
      </div>

      <main className="flex flex-1 gap-[3px] pt-[6px]">
        <aside className="w-[196px] shrink-0 border border-[#828790] bg-white pt-px pl-1">
          <ul>
            <li className="flex h-[18px] items-center gap-[5px] leading-[18px]">
              <ManagerIcon />
              Hyper-V Manager
            </li>
            <li className="ml-[17px] flex h-[18px] w-9 items-center gap-[5px] rounded-[2px] bg-[#d9d9d9] pl-[2px] leading-[18px]">
              <HostIcon />
              IT
            </li>
          </ul>
        </aside>

        <div className="flex min-w-0 flex-1 flex-col gap-1 border-2 border-t-[#696969] border-r-[#e8e8e8] border-b-[#e8e8e8] border-l-[#828282] bg-white px-2 pt-2 pb-2">
          <section className="flex flex-[357_1_0%] flex-col border border-[#a0a0a0]">
            <GroupHeader title="Virtual Machines" />
            <div className="flex flex-1 bg-linear-to-r from-[#f7f7f7] from-[159px] to-white to-[159px]">
              <table className="h-fit w-[1200px] table-fixed text-left">
                <colgroup>
                  <col className="w-[159px]" />
                  <col />
                </colgroup>
                <thead>
                  <tr className="h-6 bg-white">
                    <th scope="col" className="relative border-r border-[#dcdcdc] pl-[6px] font-normal">
                      Name
                      <svg viewBox="0 0 8 4" className="absolute top-0 left-[77px] h-1 w-2" fill="none" stroke="#555" aria-hidden="true">
                        <path d="m.5 3.500 3.500-3 3.500 3" />
                      </svg>
                    </th>
                    <th scope="col" className="pl-[6px] font-normal">State</th>
                  </tr>
                </thead>
                <tbody className="font-['Liberation_Sans']">
                  <tr className="h-[19px] bg-[#efefef]">
                    <td className="p-0">
                      <span className="flex items-center leading-[19px]">
                        <span className="flex h-[19px] w-5 items-center bg-white pl-[5px]">
                          <ServerIcon />
                        </span>
                        <span className="relative pl-[2px]">New Virtual Machine</span>
                      </span>
                    </td>
                    <td className="p-0 pl-[6px]">Running</td>
                  </tr>
                </tbody>
              </table>
            </div>
          </section>

          <section className="flex flex-[353_1_0%] flex-col border border-[#a0a0a0]">
            <GroupHeader title="Checkpoints">
              <button type="button" aria-label="Collapse" className="grid size-4 place-items-center rounded-full border border-[#777] bg-white">
                <svg viewBox="0 0 6 4" className="h-1 w-[6px]" aria-hidden="true">
                  <path d="M3 0 6 4H0z" fill="#222" />
                </svg>
              </button>
            </GroupHeader>
            <div className="pt-[3px] pl-[10px] font-['Liberation_Sans'] text-[11px]">
              <div className="flex h-4 items-center">
                <svg viewBox="0 0 9 9" className="size-[9px]" fill="none" aria-hidden="true">
                  <rect x=".5" y=".5" width="8" height="8" fill="#fff" stroke="#919191" />
                  <path d="M2 4.500h5" stroke="#3b5fa8" />
                </svg>
                <span className="w-[6px] border-t border-dotted border-[#777]" />
                <CheckpointIcon />
                <span className="pl-[5px]">Automatic Checkpoint - New Virtual Machine</span>
              </div>
              <div className="flex h-4 items-center pl-[23px]">
                <span className="mb-2 h-2 w-[11px] border-b border-l border-dotted border-[#777]" />
                <svg viewBox="0 0 8 12" className="ml-1 h-3 w-2" aria-hidden="true">
                  <path d="M0 0 8 6 0 12z" fill="#1ec32a" />
                </svg>
                <span className="pl-[9px]">Now</span>
              </div>
            </div>
          </section>

          <section className="mt-[2px] flex h-[194px] shrink-0 flex-col border border-[#a0a0a0]">
            <GroupHeader title="New Virtual Machine" />
            <div className="mr-[2px] flex flex-1 gap-[9px] border-r border-b border-[#e0e0e0] bg-[#f9f9f9] pt-[13px] pl-3">
              <div className="mt-[3px] h-[61px] w-[81px] border border-t-[#828282] border-r-white border-b-white border-l-[#828282] bg-black" />
              <dl className="text-[11px] leading-5 font-bold">
                <dt>Created:</dt>
                <dt>Configuration Version:</dt>
                <dt>Generation:</dt>
                <dt>Notes:</dt>
              </dl>
            </div>
            <div role="tablist" className="flex h-[21px] shrink-0 items-start font-['Liberation_Sans'] text-[11px]">
              <button type="button" role="tab" aria-selected="true" className="h-5 bg-[#f9f9f9] pt-1 pr-1 pl-2">
                Summary
              </button>
              <button type="button" role="tab" aria-selected="false" className="mt-px h-[18px] border-x border-b border-[#e2e2e2] bg-[#f3f3f3] px-[3px]">
                Memory
              </button>
              <button type="button" role="tab" aria-selected="false" className="mt-px h-[18px] border-r border-b border-[#e2e2e2] bg-[#f3f3f3] pr-[3px] pl-1">
                Networking
              </button>
            </div>
          </section>
        </div>

        <aside className="ml-px w-[356px] shrink-0 border-t-2 border-r border-l-2 border-t-[#696969] border-r-[#e3e3e3] border-l-[#696969] bg-white">
          <h2 className="mb-px flex h-[21px] items-center border-b border-[#a0a0a0] bg-[#f0f0f0] pl-1 text-[11px] font-bold">Actions</h2>
          <ActionSection title="IT" groups={hostActions} />
          <ActionSection title="New Virtual Machine" groups={vmActions} />
        </aside>
      </main>

      <div className="flex h-[23px] shrink-0 justify-end border-t border-[#d7d7d7]">
        <span className="mt-px w-[133px] border-l border-[#d7d7d7]" />
        <span className="mt-px mr-[2px] w-[86px] border-x border-[#d7d7d7]" />
      </div>
      <Taskbar />
      <ConnectionWindow />
    </div>
  );
}
